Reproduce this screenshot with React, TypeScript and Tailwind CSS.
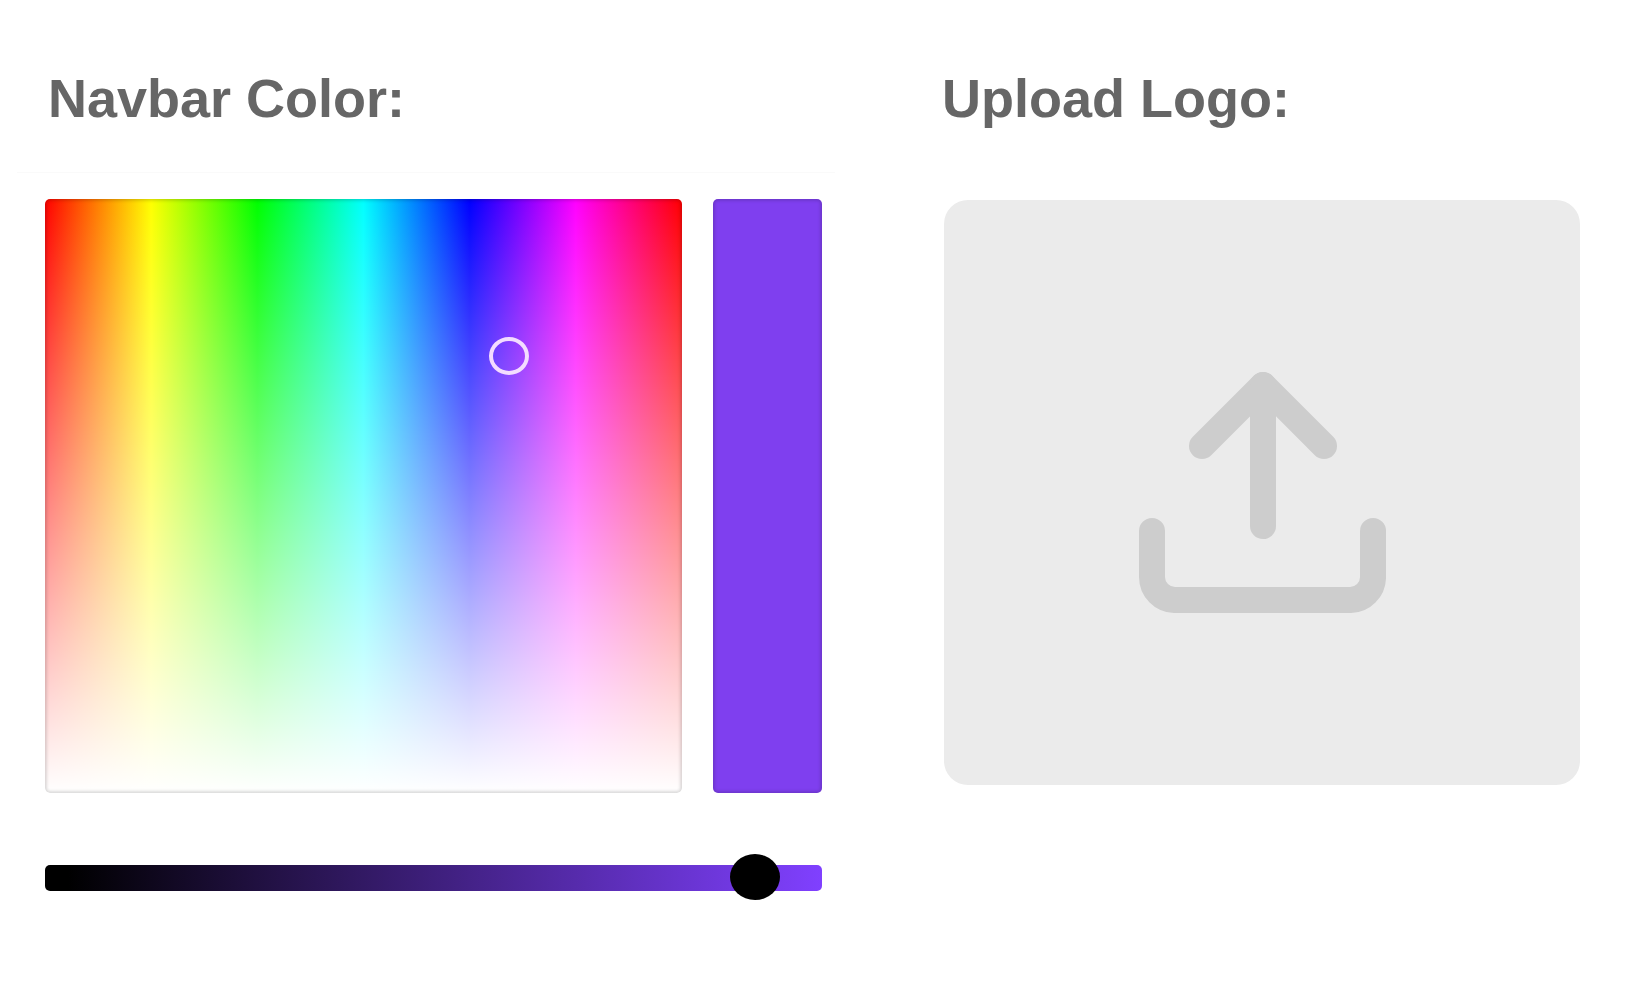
import { useState } from "react";

type headingprops = { id: string, text: string };

function Heading({ id, text }: headingprops) {
  return (
    <h2 id={id} className="text-[54px] leading-16 font-bold text-[#666666] whitespace-nowrap">
      {text}
    </h2>
  );
}

function ColorPicker() {
  const [level, setLevel] = useState(942);
  const [hue, setHue] = useState(262);
  const [fade, setFade] = useState(0.264);

  const pick = (e: React.MouseEvent<HTMLDivElement>) => {
    const box = e.currentTarget.getBoundingClientRect();
    setHue(Math.round(((e.clientX - box.left) / box.width) * 360));
    setFade((e.clientY - box.top) / box.height);
  };

  return (
    <section className="flex flex-col">
      <div className="pl-[31px]">
        <Heading id="navbar-color" text="Navbar Color:" />
      </div>
      <hr className="mt-[42px] border-[#fafafa]" />
      <div className="pt-[26px] pl-7 pr-[13px]">
        <div className="grid grid-cols-[637fr_109fr] gap-[31px]">
          {/* hue goes left to right, white fades in towards the bottom */}
          <div
            onClick={pick}
            className="relative aspect-[637/594] rounded-[5px] bg-[linear-gradient(to_bottom,rgba(255,255,255,0),#fff),linear-gradient(to_right,#f00,#ff0,#0f0,#0ff,#00f,#f0f,#f00)] shadow-[inset_0_0_3px_2px_rgba(0,0,0,0.14)]"
          >
            <button
              type="button"
              aria-label="Picked color"
              className="absolute h-[38px] w-10 -translate-x-1/2 -translate-y-1/2 rounded-[50%] border-4 border-[#f3dcff]"
              style={{ left: `${(hue / 360) * 100}%`, top: `${fade * 100}%` }}
            />
          </div>
          <div className="rounded-[5px] bg-[#7f3fef] shadow-[inset_0_0_3px_2px_rgba(0,0,0,0.14)]" />
        </div>
        <input
          type="range"
          min={0}
          max={1000}
          value={level}
          onChange={(e) => setLevel(Number(e.target.value))}
          aria-labelledby="navbar-color"
          className="mt-[61px] block h-12 w-full cursor-pointer appearance-none bg-transparent [&::-webkit-slider-runnable-track]:h-[26px] [&::-webkit-slider-runnable-track]:rounded-[5px] [&::-webkit-slider-runnable-track]:bg-[linear-gradient(to_right,#000_3%,#8040ff)] [&::-webkit-slider-thumb]:-mt-[11px] [&::-webkit-slider-thumb]:h-[46px] [&::-webkit-slider-thumb]:w-[50px] [&::-webkit-slider-thumb]:appearance-none [&::-webkit-slider-thumb]:rounded-[50%] [&::-webkit-slider-thumb]:bg-black"
        />
      </div>
    </section>
  );
}

function UploadLogo() {
  return (
    <section className="flex flex-col">
      <div className="pl-[2px]">
        <Heading id="upload-logo" text="Upload Logo:" />
      </div>
      <label className="mt-[70px] ml-1 flex aspect-[636/585] cursor-pointer items-center justify-center rounded-3xl bg-[#ebebeb]">
        <input type="file" accept="image/*" aria-labelledby="upload-logo" className="sr-only" />
        <svg
          viewBox="0 0 248 241"
          className="w-[39%]"
          fill="none"
          stroke="#cdcdcd"
          strokeWidth="26"
          strokeLinecap="round"
          strokeLinejoin="round"
        >
          <path d="M64 74 125 13l61 61" />
          <path d="M125 13v141" />
          <path d="M14 159v46a23 23 0 0 0 23 23h175a23 23 0 0 0 23-23v-46" />
        </svg>
      </label>
    </section>
  );
}

export default function App() {
  return (
    <main className="grid min-h-screen grid-cols-[818fr_640fr] items-start gap-[105px] bg-white pt-[66px] pb-20 pl-[17px] pr-[69px] font-['Liberation_Sans',Arial,sans-serif]">
      <ColorPicker />
      <UploadLogo />
    </main>
  );
}
